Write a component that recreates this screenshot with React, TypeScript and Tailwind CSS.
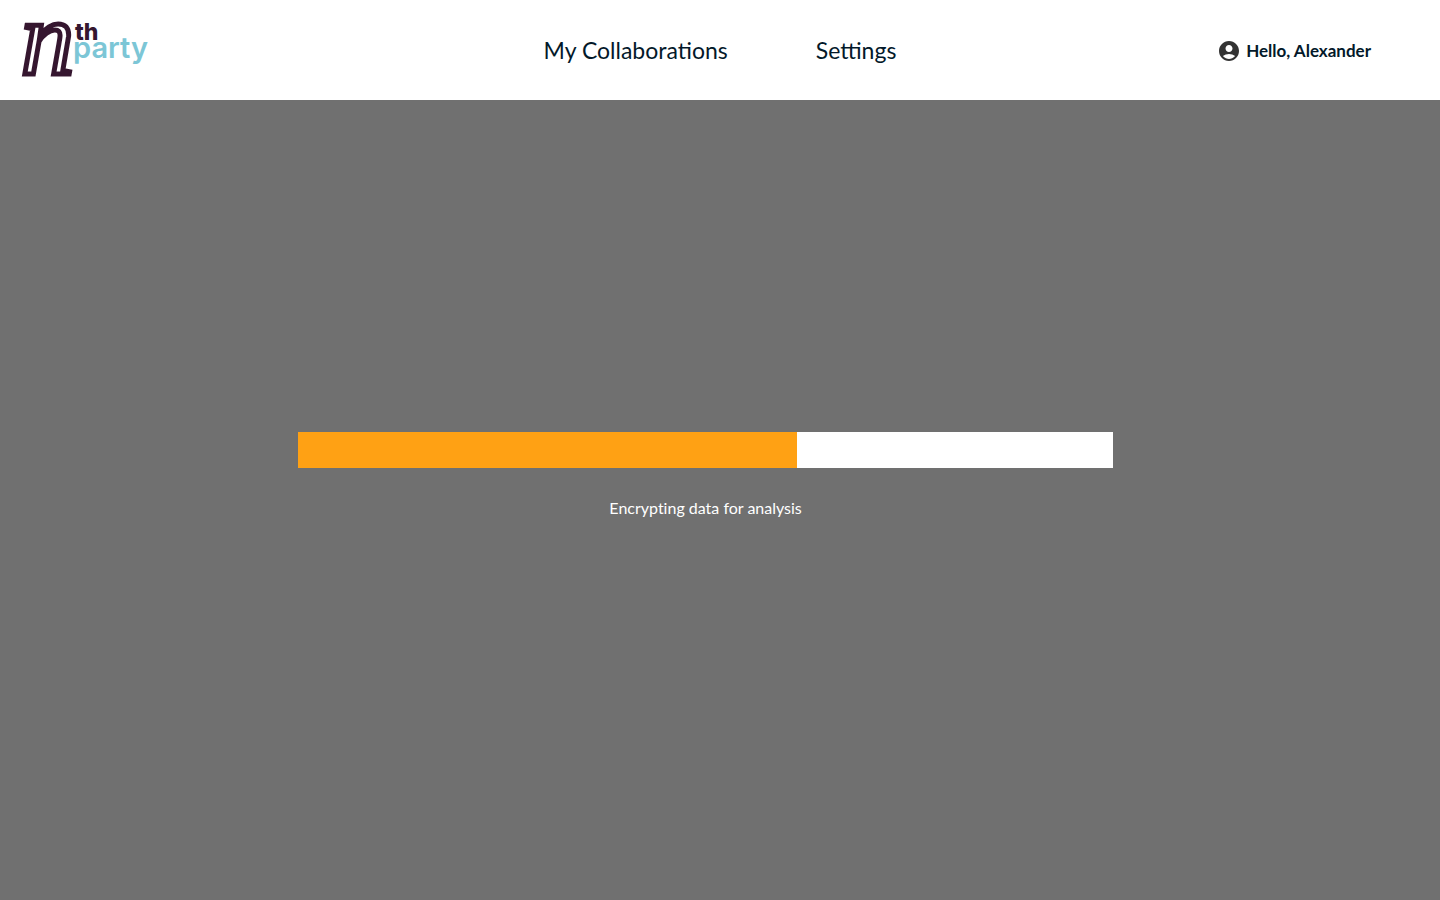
import { MdAccountCircle } from 'react-icons/md'

const links = [
  { label: 'My Collaborations', href: '#collaborations' },
  { label: 'Settings', href: '#settings' },
]

function Logo() {
  return (
    <svg viewBox="0 0 150 100" className="block h-[100px] w-[150px] overflow-visible" role="img" aria-label="nth party">
      <text
        x="21"
        y="74"
        fontFamily="'Liberation Serif', serif"
        fontStyle="italic"
        fontSize="106"
        fill="#ffffff"
        stroke="#35162f"
        strokeWidth="5"
        strokeLinejoin="miter"
      >
        n
      </text>
      <text x="75" y="40" fontFamily="Inter, sans-serif" fontWeight="800" fontSize="23" fill="#35162f">
        th
      </text>
      <text x="73" y="58" fontFamily="Inter, sans-serif" fontWeight="600" fontSize="29" fill="#7cc6d6">
        party
      </text>
    </svg>
  )
}

function ProgressBar({ value, label }: { value: number; label: string }) {
  return (
    <div className="ml-[20.7%] w-[56.6%]">
      <div
        role="progressbar"
        aria-label={label}
        aria-valuenow={value}
        aria-valuemin={0}
        aria-valuemax={100}
        className="h-9 bg-white"
      >
        <div className="h-full bg-[#ffa114]" style={{ width: `${value}%` }} />
      </div>
      <p className="mt-7 text-center text-[16px] leading-[24px] text-white [font-variant-ligatures:none]">{label}</p>
    </div>
  )
}

export default function App() {
  return (
    <div className="flex min-h-screen flex-col bg-[#707070] font-['Lato',sans-serif]">
      <header className="grid h-[100px] grid-cols-[1fr_auto_1fr] items-center bg-white text-[#03192a]">
        <a href="#home" className="justify-self-start">
          <Logo />
        </a>
        <nav className="flex gap-[88px] text-[23px] leading-[32px]">
          {links.map(l => (
            <a key={l.label} href={l.href}>{l.label}</a>
          ))}
        </nav>
        <button type="button" className="mr-[69px] flex items-center gap-[5px] justify-self-end pt-[2px] text-[17px] leading-[24px] font-bold">
          <MdAccountCircle className="size-6 text-[#333333]" />
          Hello, Alexander
        </button>
      </header>
      <main className="flex-1 pt-[332px]">
        <ProgressBar value={61.2} label="Encrypting data for analysis" />
      </main>
    </div>
  )
}
